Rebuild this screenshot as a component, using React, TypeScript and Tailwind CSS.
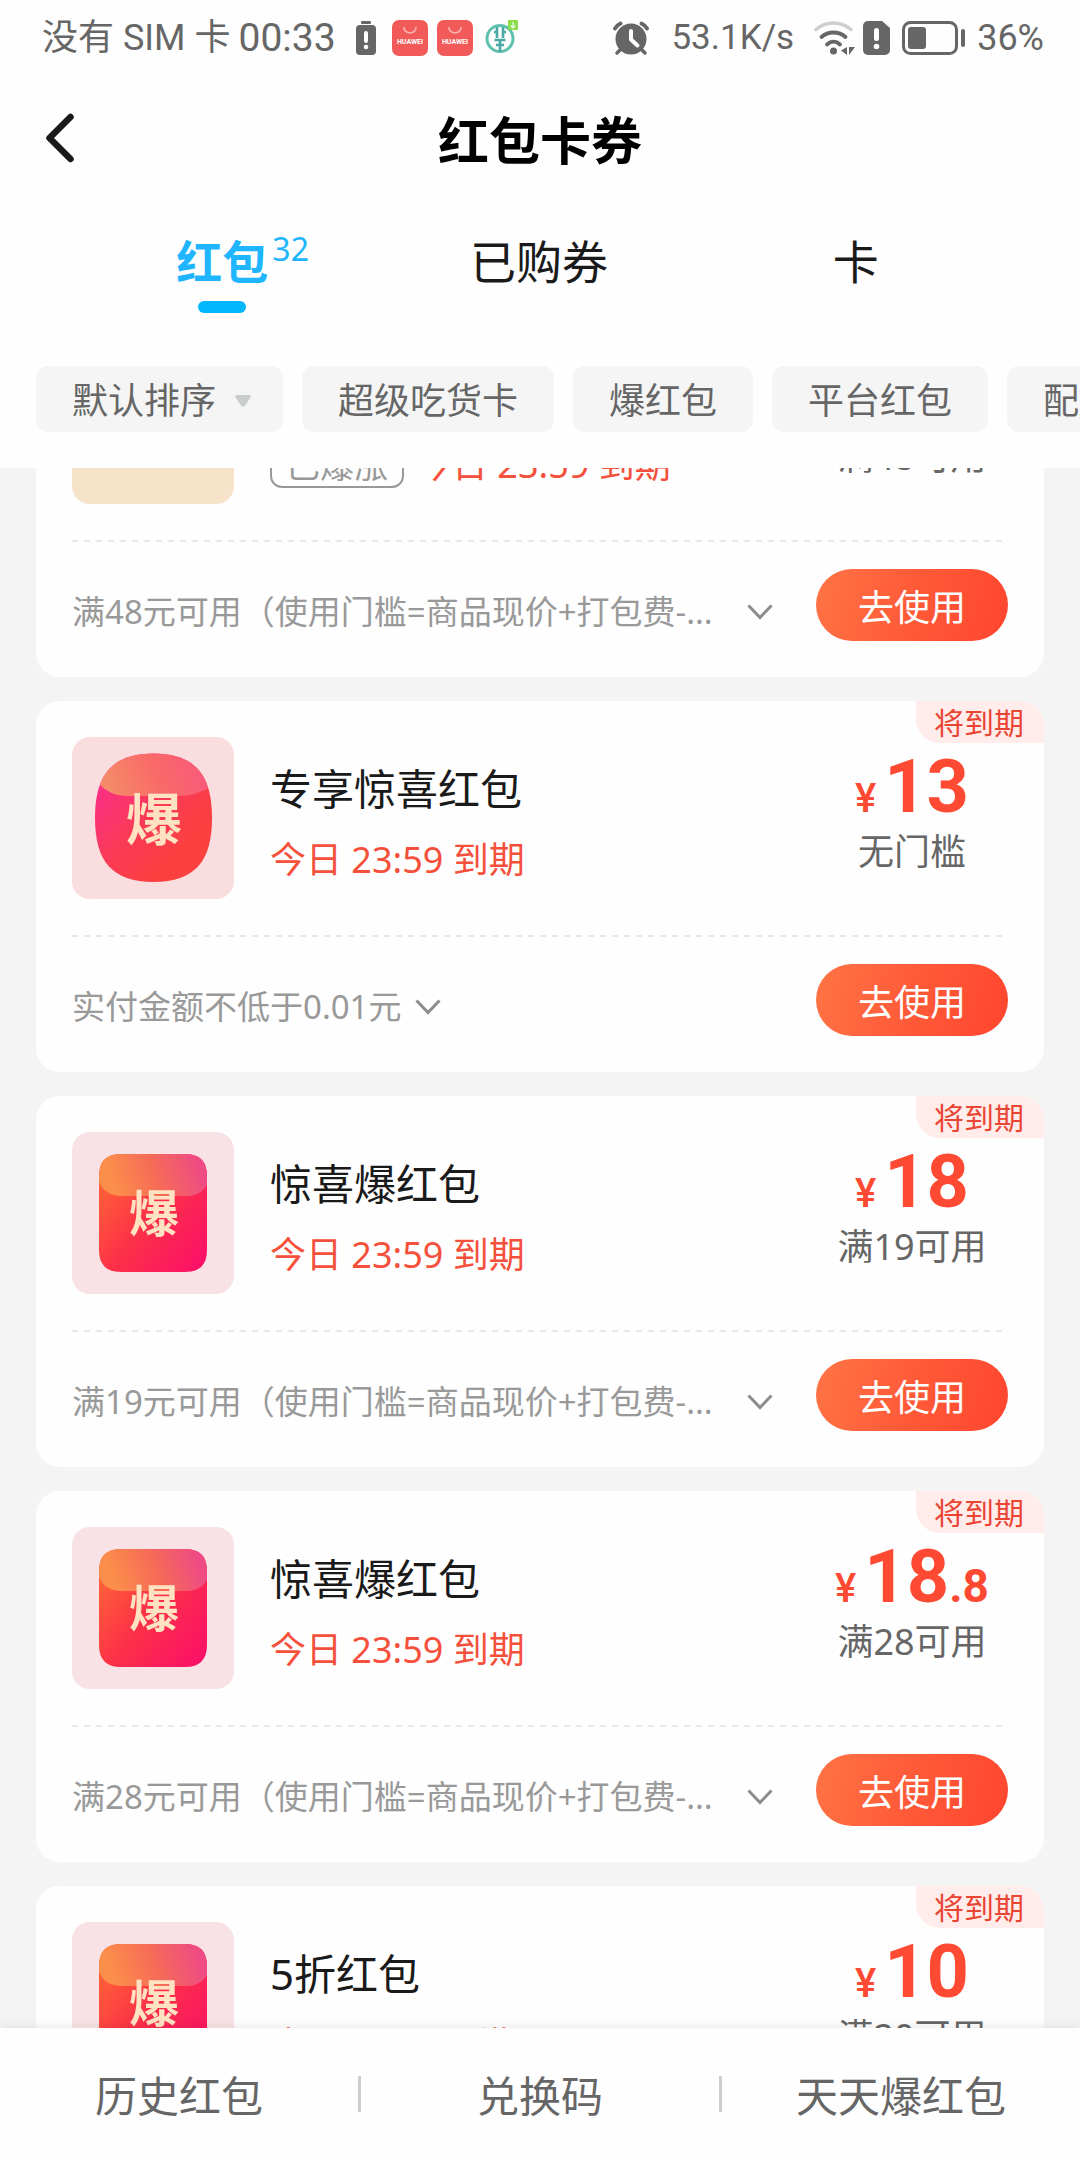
import { useLayoutEffect, useRef } from "react";

type IconKind = "tan" | "round" | "square";

interface Coupon {
  id: string;
  title?: string;
  icon: IconKind;
  amount?: string;
  decimal?: string;
  condition: string;
  rule: string;
  long?: boolean;
  boosted?: boolean;
  expiring?: boolean;
}

const coupons: Coupon[] = [
  {
    id: "c1",
    icon: "tan",
    condition: "满48可用",
    rule: "满48元可用（使用门槛=商品现价+打包费-...",
    long: true,
    boosted: true,
  },
  {
    id: "c2",
    title: "专享惊喜红包",
    icon: "round",
    amount: "13",
    condition: "无门槛",
    rule: "实付金额不低于0.01元",
    expiring: true,
  },
  {
    id: "c3",
    title: "惊喜爆红包",
    icon: "square",
    amount: "18",
    condition: "满19可用",
    rule: "满19元可用（使用门槛=商品现价+打包费-...",
    long: true,
    expiring: true,
  },
  {
    id: "c4",
    title: "惊喜爆红包",
    icon: "square",
    amount: "18",
    decimal: ".8",
    condition: "满28可用",
    rule: "满28元可用（使用门槛=商品现价+打包费-...",
    long: true,
    expiring: true,
  },
  {
    id: "c5",
    title: "5折红包",
    icon: "square",
    amount: "10",
    condition: "满20可用",
    rule: "满20元可用（使用门槛=商品现价+打包费-...",
    long: true,
    expiring: true,
  },
];

function HuaweiIcon() {
  return (
    <svg width="36" height="36" viewBox="0 0 36 36" aria-hidden="true">
      <rect width="36" height="36" rx="7" fill="#f25a5a" />
      <path d="M12 7.5a6 5.5 0 0 0 12 0" fill="none" stroke="#fbb4b0" strokeWidth="1.6" strokeLinecap="round" />
      <text x="18" y="24" textAnchor="middle" fontSize="7" fontWeight="700" fill="#fff" fontFamily="Roboto, sans-serif">
        HUAWEI
      </text>
    </svg>
  );
}

function StatusBar() {
  return (
    <div className="flex h-[76px] items-center justify-between pr-9 pl-[42px] font-[Roboto,'Noto_Sans_CJK_SC',sans-serif] text-[36px] leading-[40px] text-[#666]">
      <div className="flex items-center">
        <span>没有 SIM 卡</span>
        <span className="ml-2 text-[39px]">00:33</span>
        <svg className="ml-5" width="20" height="34" viewBox="0 0 20 34" aria-hidden="true">
          <rect x="5" y="0" width="10" height="3" rx="1" fill="#666" />
          <rect x="0" y="4" width="20" height="30" rx="4" fill="#666" />
          <rect x="8" y="10" width="4" height="12" rx="2" fill="#fff" />
          <circle cx="10" cy="26" r="2.3" fill="#fff" />
        </svg>
        <span className="ml-4 flex gap-[9px]">
          <HuaweiIcon />
          <HuaweiIcon />
        </span>
        <svg className="ml-3" width="34" height="36" viewBox="0 0 34 36" aria-hidden="true">
          <circle cx="15" cy="18.5" r="13" fill="none" stroke="#5fc0ae" strokeWidth="3" />
          <path
            d="M15 20v12M12 7v11M18 7v11M9 12h3M18 12h3M9.500 20h11M11 25h8"
            fill="none"
            stroke="#49a9a5"
            strokeWidth="2.6"
          />
          <rect x="23" y="0" width="10" height="10" rx="1" fill="#8bdc4a" />
          <path d="M28 2v6M25.500 5.500 28 8l2.500-2.500" fill="none" stroke="#e6f9d6" strokeWidth="1.5" />
        </svg>
      </div>
      <div className="flex items-center">
        <svg width="36" height="36" viewBox="0 0 36 36" aria-hidden="true">
          <circle cx="18" cy="19" r="15.5" fill="#666" />
          <path d="m8 29-4 4M28 29l4 4" stroke="#666" strokeWidth="3.5" strokeLinecap="round" />
          <path d="M2 8.500Q4 5 7.500 3.500M34 8.500Q32 5 28.500 3.500" fill="none" stroke="#666" strokeWidth="3.8" strokeLinecap="round" />
          <path d="M18 11v8.500l6.500 6" fill="none" stroke="#fff" strokeWidth="4" strokeLinecap="round" strokeLinejoin="round" />
        </svg>
        <span className="ml-[22px] text-[35px]">53.1K/s</span>
        <svg className="ml-5" width="41" height="36" viewBox="0 0 41 36" aria-hidden="true">
          <path d="M2 9.500Q9.500 3 19.500 3T37 9.500" fill="none" stroke="#cfcfcf" strokeWidth="3.6" strokeLinecap="round" />
          <path d="M7.500 17Q12.500 12.500 19.500 12.500T31.500 17" fill="none" stroke="#666" strokeWidth="3.8" strokeLinecap="round" />
          <path d="M13 24.500q3-2.800 6.500-2.800t6.500 2.800" fill="none" stroke="#666" strokeWidth="3.8" strokeLinecap="round" />
          <circle cx="19.5" cy="31" r="3.5" fill="#666" />
          <path d="M33 27v8l-6-4.500zM35 27h6l-6 8z" fill="#666" />
        </svg>
        <svg className="ml-2" width="27" height="34" viewBox="0 0 27 34" aria-hidden="true">
          <path d="M5 0h14l8 7v22a5 5 0 0 1-5 5H5a5 5 0 0 1-5-5V5a5 5 0 0 1 5-5z" fill="#666" />
          <rect x="11" y="7" width="5" height="13" rx="2.5" fill="#fff" />
          <circle cx="13.5" cy="25.5" r="2.8" fill="#fff" />
        </svg>
        <svg className="ml-3" width="65" height="34" viewBox="0 0 65 34" aria-hidden="true">
          <rect x="1.5" y="1.5" width="53" height="31" rx="7" fill="none" stroke="#666" strokeWidth="3" />
          <rect x="6" y="6" width="18" height="22" rx="3" fill="#666" />
          <rect x="59" y="8" width="4" height="18" rx="2" fill="#666" />
        </svg>
        <span className="ml-[10px]">36%</span>
      </div>
    </div>
  );
}

function Header() {
  const chips = ["超级吃货卡", "爆红包", "平台红包", "配送红包"];
  return (
    <header className="shrink-0 bg-[#fefefe]">
      <StatusBar />
      <div className="grid h-[128px] grid-cols-[1fr_auto_1fr] items-center px-11">
        <button type="button" aria-label="返回" className="mb-1 justify-self-start">
          <svg width="32" height="50" viewBox="0 0 32 50" aria-hidden="true">
            <path d="M26.500 4 5.500 25l21 21" fill="none" stroke="#1a1a1a" strokeWidth="6.5" strokeLinecap="round" strokeLinejoin="round" />
          </svg>
        </button>
        <h1 className="text-[51px] leading-[60px] font-bold text-black">红包卡券</h1>
      </div>
      <nav className="grid grid-cols-3 pt-[22px] pr-[66px] pl-16 text-[46px] leading-[70px] text-[#1a1a1a]">
        <button type="button" className="flex flex-col items-center font-bold text-[#1fb6ff]">
          <span className="relative">
            红包
            <span className="absolute -top-3 left-full ml-1 text-[32px] font-normal">32</span>
          </span>
          <span className="mt-[5px] h-3 w-12 rounded-full bg-[#02b6fd]" />
        </button>
        <button type="button" className="flex flex-col items-center">已购券</button>
        <button type="button" className="flex flex-col items-center">卡</button>
      </nav>
      <div className="flex gap-[19px] overflow-hidden px-9 pt-[53px] pb-9 text-[36px] leading-[62px] whitespace-nowrap text-[#666]">
        <button type="button" className="flex shrink-0 items-center gap-[19px] rounded-xl bg-[#f5f5f5] pt-1 pr-8 pl-9">
          默认排序
          <svg width="16" height="12" viewBox="0 0 16 12" aria-hidden="true">
            <path d="M1.500 0h13q2 .5 1 2.500L10 10.500q-2 2.500-4 0L.5 2.500Q-.5.500 1.500 0z" fill="#c9cdcd" />
          </svg>
        </button>
        {chips.map((c) => (
          <button key={c} type="button" className="shrink-0 rounded-xl bg-[#f5f5f5] px-9 pt-1">
            {c}
          </button>
        ))}
      </div>
    </header>
  );
}

function CouponIcon({ kind, id }: { kind: IconKind; id: string }) {
  if (kind === "tan") {
    return <div className="size-[162px] shrink-0 rounded-[18px] bg-[#f7e2ca]" />;
  }
  const round = kind === "round";
  const shape = round
    ? "M81.500 16.500C123 16.500 140 38 140 81S123 145 81.500 145 23 124 23 81 40 16.500 81.500 16.500z"
    : "M49 22h64q22 0 22 22v74q0 22-22 22H49q-22 0-22-22V44q0-22 22-22z";
  const cap = round
    ? "M18 0h126v46Q128 59 105 59H54Q38 59 26 46L18 40z"
    : "M24 0h114v44q-4 20-25 20H50Q30 64 26 46z";
  return (
    <svg className="shrink-0" width="162" height="162" viewBox="0 0 162 162" aria-hidden="true">
      <defs>
        <linearGradient id={`${id}-body`} x1="0" y1={round ? "0.3" : "0.1"} x2={round ? "0.6" : "1"} y2="0.9">
          <stop offset="0" stopColor={round ? "#fb2f86" : "#ff6a35"} />
          <stop offset="0.5" stopColor={round ? "#f93a58" : "#fc3048"} />
          <stop offset="1" stopColor={round ? "#fb403f" : "#fb1068"} />
        </linearGradient>
        <linearGradient id={`${id}-cap`} x1="0" y1="0.6" x2="1" y2="0.4">
          <stop offset="0.1" stopColor={round ? "#f48a68" : "#fb8e4a"} />
          <stop offset="0.5" stopColor={round ? "#fa6a68" : "#f66a58"} />
          <stop offset="0.9" stopColor={round ? "#f8597c" : "#ee4a86"} />
        </linearGradient>
        <clipPath id={`${id}-clip`}>
          <path d={shape} />
        </clipPath>
      </defs>
      <rect width="162" height="162" rx="18" fill={round ? "#fadddf" : "#f9e2e5"} />
      <path d={shape} fill={`url(#${id}-body)`} />
      <path d={cap} fill={`url(#${id}-cap)`} clipPath={`url(#${id}-clip)`} />
      <text
        x={round ? 82 : 82}
        y={round ? 103 : 100}
        textAnchor="middle"
        fontSize={round ? 56 : 50}
        fontWeight="700"
        fill="#ffe2c2"
        fontFamily='"Noto Sans CJK SC", sans-serif'
      >
        爆
      </text>
    </svg>
  );
}

function CouponCard({ coupon }: { coupon: Coupon }) {
  return (
    <article className="relative overflow-hidden rounded-[24px] bg-[#fefefe] p-9">
      {coupon.expiring && (
        <span className="absolute top-0 right-0 rounded-bl-[24px] bg-[#ffeceb] pt-0.5 pr-5 pl-[18px] text-[30px] leading-[40px] text-[#ea4433]">
          将到期
        </span>
      )}
      <div className="flex">
        <CouponIcon kind={coupon.icon} id={coupon.id} />
        <div className="ml-9 flex flex-1 flex-col pt-[22px]">
          <h2 className="h-[60px] text-[42px] leading-[60px] text-[#1a1a1a]">{coupon.title}</h2>
          <div className="mt-4 flex h-[50px] items-center gap-3 text-[36px] leading-[50px] text-[#f5503c]">
            {coupon.boosted && (
              <span className="rounded-xl border-2 border-[#999] px-[14px] text-[34px] leading-[42px] text-[#999]">已爆涨</span>
            )}
            <span>今日 23:59 到期</span>
          </div>
        </div>
        <div className="flex w-[192px] flex-col items-center pt-3 whitespace-nowrap">
          <div className="flex h-[76px] items-baseline font-[Roboto,sans-serif] leading-none text-[#ff4a33]">
            {coupon.amount && (
              <>
                <span className="mr-2 text-[40px] font-medium">¥</span>
                <span className="text-[74px] leading-[76px] font-bold">{coupon.amount}</span>
                {coupon.decimal && <span className="text-[46px] font-bold">{coupon.decimal}</span>}
              </>
            )}
          </div>
          <span className="mt-0.5 text-[36px] leading-[50px] text-[#666]">{coupon.condition}</span>
        </div>
      </div>
      <div className="mt-9 h-[2px] bg-[repeating-linear-gradient(90deg,#e8e8e8_0_6px,transparent_6px_12px)]" />
      <div className="mt-[27px] flex items-center justify-between">
        <button
          type="button"
          className="mt-[14px] mr-[43px] flex min-w-0 flex-1 items-center gap-[14px] text-left text-[33px] leading-[48px] text-[#999]"
        >
          <span className={coupon.long ? "flex-1 whitespace-nowrap" : "whitespace-nowrap"}>{coupon.rule}</span>
          <svg width="26" height="16" viewBox="0 0 26 16" aria-hidden="true">
            <path d="m1.500 1.500 11.500 12 11.500-12" fill="none" stroke="#8c8c8c" strokeWidth="3" />
          </svg>
        </button>
        <button
          type="button"
          className="h-[72px] w-[192px] rounded-full bg-[linear-gradient(105deg,#ff7445_0%,#ff5a38_50%,#ff452f_100%)] pt-1.5 text-[36px] leading-[66px] text-white"
        >
          去使用
        </button>
      </div>
    </article>
  );
}

function Footer() {
  return (
    <footer className="relative flex h-[132px] shrink-0 items-center bg-[#fefefe] text-[42px] leading-[60px] text-[#666] shadow-[0_-2px_10px_rgba(0,0,0,0.08)]">
      <button type="button" className="flex-1 basis-0 pt-1 whitespace-nowrap">历史红包</button>
      <span className="h-9 w-[3px] bg-[#ccc]" />
      <button type="button" className="flex-1 basis-0 pt-1 whitespace-nowrap">兑换码</button>
      <span className="h-9 w-[3px] bg-[#ccc]" />
      <button type="button" className="flex-1 basis-0 pt-1 whitespace-nowrap">天天爆红包</button>
    </footer>
  );
}

export default function App() {
  const list = useRef<HTMLElement>(null);

  // Open the list part-way down, with the first coupon tucked under the header.
  useLayoutEffect(() => {
    if (list.current) list.current.scrollTop = 162;
  }, []);

  return (
    <div className="flex h-screen flex-col overflow-hidden bg-[#f4f4f4] font-['Noto_Sans','Noto_Sans_CJK_SC',sans-serif]">
      <Header />
      <main ref={list} className="min-h-0 flex-1 overflow-y-auto px-9 [scrollbar-width:none]">
        <div className="flex flex-col gap-6 pb-6">
          {coupons.map((c) => (
            <CouponCard key={c.id} coupon={c} />
          ))}
        </div>
      </main>
      <Footer />
    </div>
  );
}
